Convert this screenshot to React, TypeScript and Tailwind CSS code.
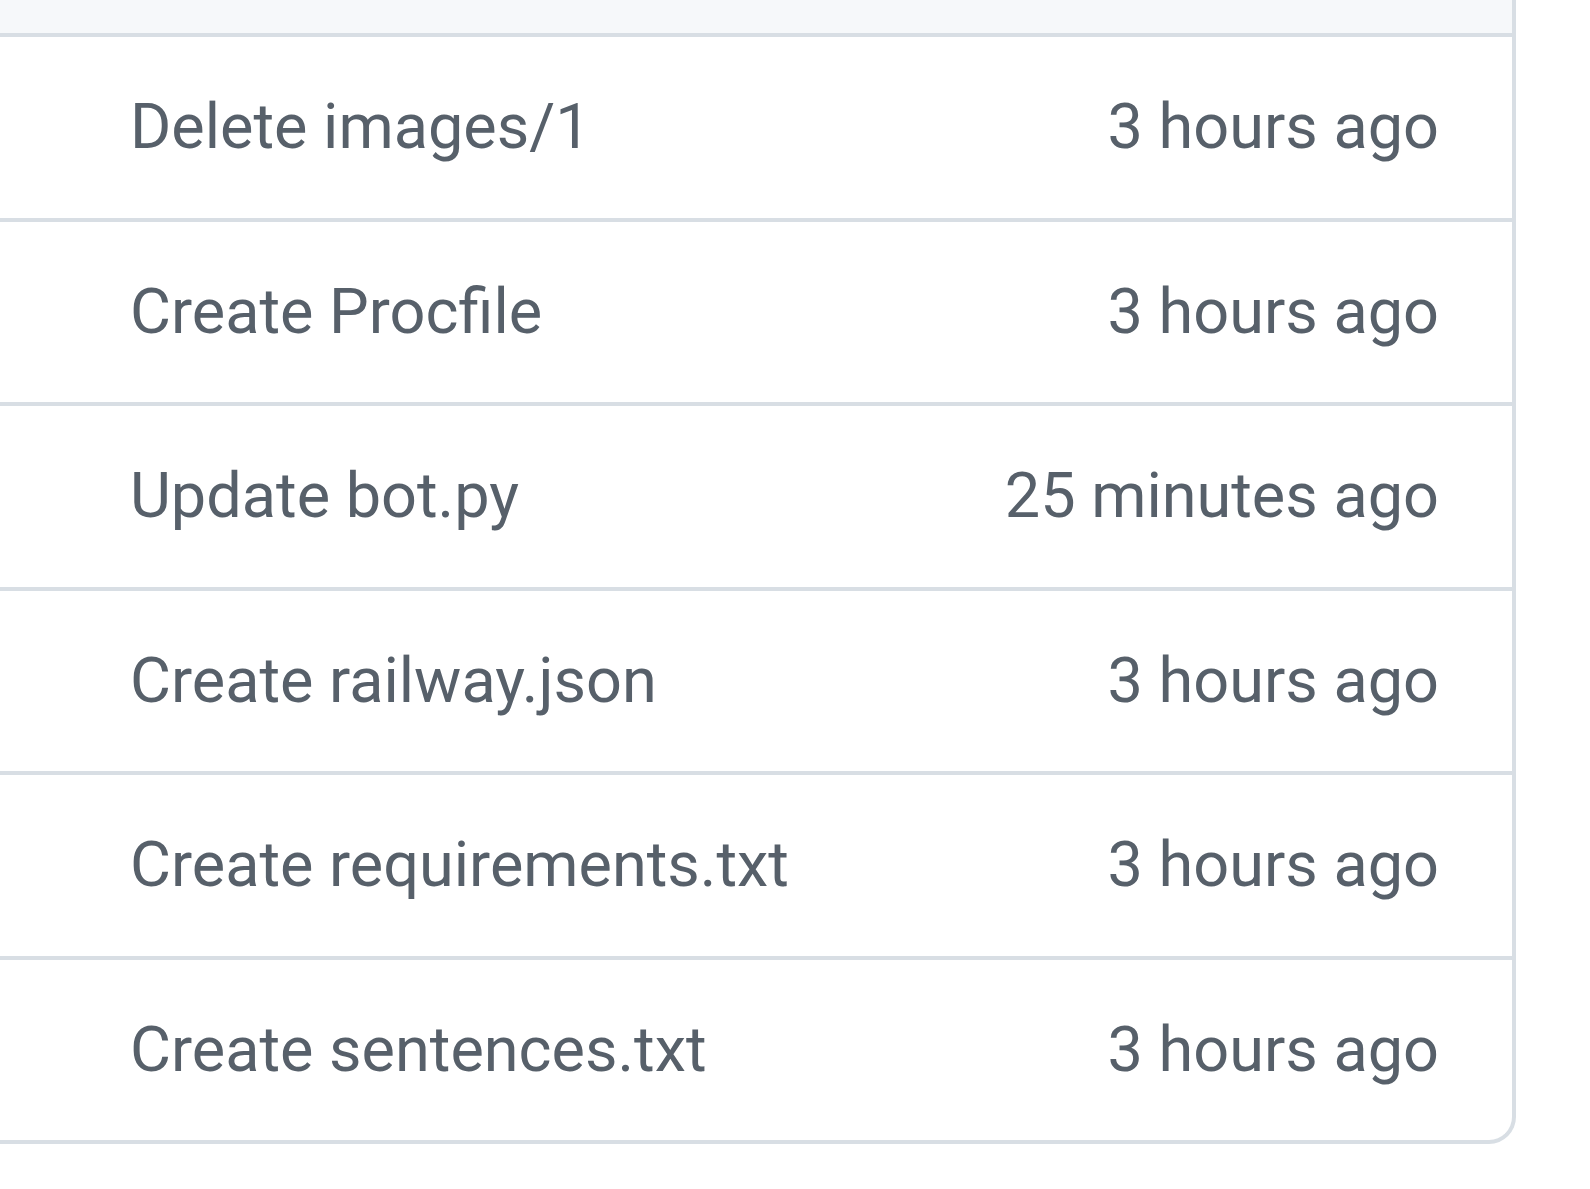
const commits = [
  { message: 'Delete images/1', time: '3 hours ago' },
  { message: 'Create Procfile', time: '3 hours ago' },
  { message: 'Update bot.py', time: '25 minutes ago' },
  { message: 'Create railway.json', time: '3 hours ago' },
  { message: 'Create requirements.txt', time: '3 hours ago' },
  { message: 'Create sentences.txt', time: '3 hours ago' },
];

export default function App() {
  return (
    <div className="w-[1590px] h-[1189px] bg-white overflow-hidden font-['Roboto',sans-serif]">
      <div className="w-[1516px] border-r-4 border-b-4 border-[#d8dee4] rounded-br-[27px] overflow-hidden">
        {/* header strip */}
        <div className="h-[37px] bg-[#f6f8fa] border-b-4 border-[#d8dee4]" />
        {commits.map((c, i) => (
          <div
            key={c.message}
            className={`flex items-center justify-between pl-[130px] pr-[73px] text-[63px] text-[#57606a] ${
              i < commits.length - 1 ? 'h-[184.5px] border-b-4 border-[#d8dee4]' : 'h-[180.5px]'
            }`}
          >
            <span>{c.message}</span>
            <span>{c.time}</span>
          </div>
        ))}
      </div>
    </div>
  );
}
